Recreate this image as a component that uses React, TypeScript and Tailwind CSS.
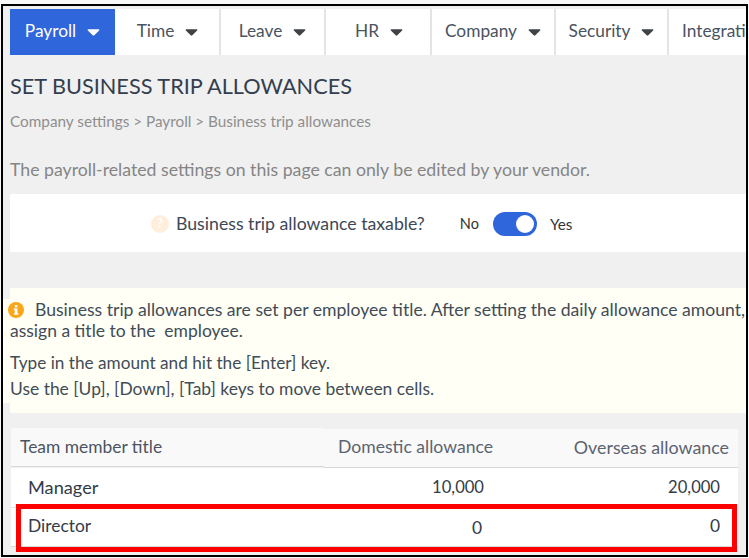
import React from "react";

const Caret = ({ white }: { white?: boolean }) => (
  <svg width="13" height="7" viewBox="0 0 13 7" className="shrink-0 mt-[3px]">
    <path d="M0.6 1.2 Q0.3 0.2 1.6 0.2 H11.4 Q12.7 0.2 12.4 1.2 L7.3 6.3 Q6.5 7 5.7 6.3 Z" fill={white ? "#ffffff" : "#3f4347"} />
  </svg>
);

const navs = [
  { label: "Time", w: "w-[106px]", extra: "pl-[1px]" },
  { label: "Leave", w: "w-[105px]", extra: "" },
  { label: "HR", w: "w-[106px]", extra: "pl-[2px]" },
  { label: "Company", w: "w-[124px]", extra: "" },
  { label: "Security", w: "w-[113px]", extra: "" },
];

export default function App() {
  return (
    <div className="w-[749px] h-[558px] bg-[#f8f8f8] pt-[4px] pl-[1px] overflow-hidden font-['Lato','Liberation_Sans',sans-serif]">
      <div className="relative w-[747px] h-[553px] border-2 border-black bg-[#f0f0f0] overflow-hidden">
        <nav className="flex ml-[7px] mt-[3px] h-[46px] w-[800px] bg-white text-[17.3px] leading-[22px] text-[#4a5360]">
          <div className="w-[105px] h-full bg-[#2f66dc] text-white flex items-center justify-center gap-[11px] pb-[2px]">
            <span>Payroll</span>
            <Caret white />
          </div>
          {navs.map((n) => (
            <div key={n.label} className={`${n.w} ${n.extra} h-full border-r-2 border-[#e4e4e4] flex items-center justify-center gap-[11px] pb-[2px]`}>
              <span>{n.label}</span>
              <Caret />
            </div>
          ))}
          <div className="pl-[13px] pb-[2px] flex items-center">Integrations</div>
        </nav>

        <h1 className="ml-[7px] mt-[18px] text-[21.7px] leading-[26px] text-[#333e4e] whitespace-nowrap">SET BUSINESS TRIP ALLOWANCES</h1>
        <p className="ml-[7px] mt-[12px] text-[15.3px] leading-[20px] text-[#8e8e8e] whitespace-nowrap">Company settings &gt; Payroll &gt; Business trip allowances</p>
        <p className="ml-[7px] mt-[28px] text-[17.7px] leading-[22px] text-[#858585] whitespace-nowrap">The payroll-related settings on this page can only be edited by your vendor.</p>

        <div className="ml-[7px] mt-[13px] w-[740px] h-[58px] bg-white flex items-center pl-[141px] pt-[2px]">
          <span className="w-[18px] h-[18px] rounded-full bg-[#ffeedb] text-white text-[13px] font-bold flex items-center justify-center">?</span>
          <span className="ml-[7px] text-[17.7px] text-[#3e4855] whitespace-nowrap">Business trip allowance taxable?</span>
          <span className="ml-[35px] text-[14.5px] text-[#333]">No</span>
          <span className="ml-[14px] w-[44px] h-[24px] rounded-full bg-[#2f66dc] flex items-center justify-end pr-[3px]">
            <span className="w-[18px] h-[18px] rounded-full bg-white" />
          </span>
          <span className="ml-[13px] text-[15.3px] text-[#333]">Yes</span>
        </div>

        <div className="ml-[7px] mt-[36px] w-[740px] h-[125px] bg-[#fffff5] pt-[8px]">
          <div className="-ml-[7px] pl-[7px] w-[747px] h-[104px] bg-[#fffff5] text-[17.3px] text-[#424c58] whitespace-nowrap">
            <div className="leading-[21px] flex items-center mt-[3px]">
              <svg width="16" height="16" viewBox="0 0 16 16" className="shrink-0 -ml-[2px]">
                <circle cx="8" cy="8" r="8" fill="#f9a61a" />
                <rect x="6.8" y="3" width="2.6" height="2.4" fill="#fff" />
                <path d="M5.8 6.6H9.4V11.2H10.4V12.8H5.8V11.2H6.8V8.2H5.8Z" fill="#fff" />
              </svg>
              <span className="ml-[11px] text-[17.6px]">Business trip allowances are set per employee title. After setting the daily allowance amount,</span>
            </div>
            <div className="leading-[21px] text-[17.5px]">assign a title to the&nbsp; employee.</div>
            <div className="leading-[26px] mt-[9px] text-[17.2px]">Type in the amount and hit the [Enter] key.</div>
            <div className="leading-[26px] text-[17.45px]">Use the [Up], [Down], [Tab] keys to move between cells.</div>
          </div>
        </div>

        <div className="ml-[8px] mt-[15px] w-[727px] text-[17.4px]">
          <div className="flex">
            <div className="w-[313px] h-[39px] bg-[#f9f9f9] border-b border-[#d8d8d8] pl-[9px] flex items-center text-[#4c5460]">Team member title</div>
            <div className="flex-1 mt-[1px] h-[39px] bg-[#f9f9f9] border-b border-[#d8d8d8] pb-[1px] flex items-center text-[#5b6470] text-[17.6px]">
              <span className="w-[169px] text-right">Domestic allowance</span>
              <span className="w-[236px] text-right text-[17.85px]">Overseas allowance</span>
            </div>
          </div>
          <div className="flex h-[40px] bg-white border-b border-[#e2e2e2] items-center text-[#333b47]">
            <span className="w-[313px] pl-[17px] text-[18.2px]">Manager</span>
            <span className="w-[160px] text-right text-[16.6px]">10,000</span>
            <span className="w-[236px] text-right text-[16.6px]">20,000</span>
          </div>
          <div className="flex h-[39px] bg-white border-b border-[#d8d8d8] items-center text-[#333b47]">
            <span className="w-[313px] pl-[17px] pb-[2px]">Director</span>
            <span className="w-[158px] text-right pt-[2px]">0</span>
            <span className="w-[238px] text-right pb-[2px]">0</span>
          </div>
        </div>

        <div className="absolute left-[13px] top-[498px] w-[721px] h-[48px] border-[5px] border-[#ff0000]" />
      </div>
    </div>
  );
}
